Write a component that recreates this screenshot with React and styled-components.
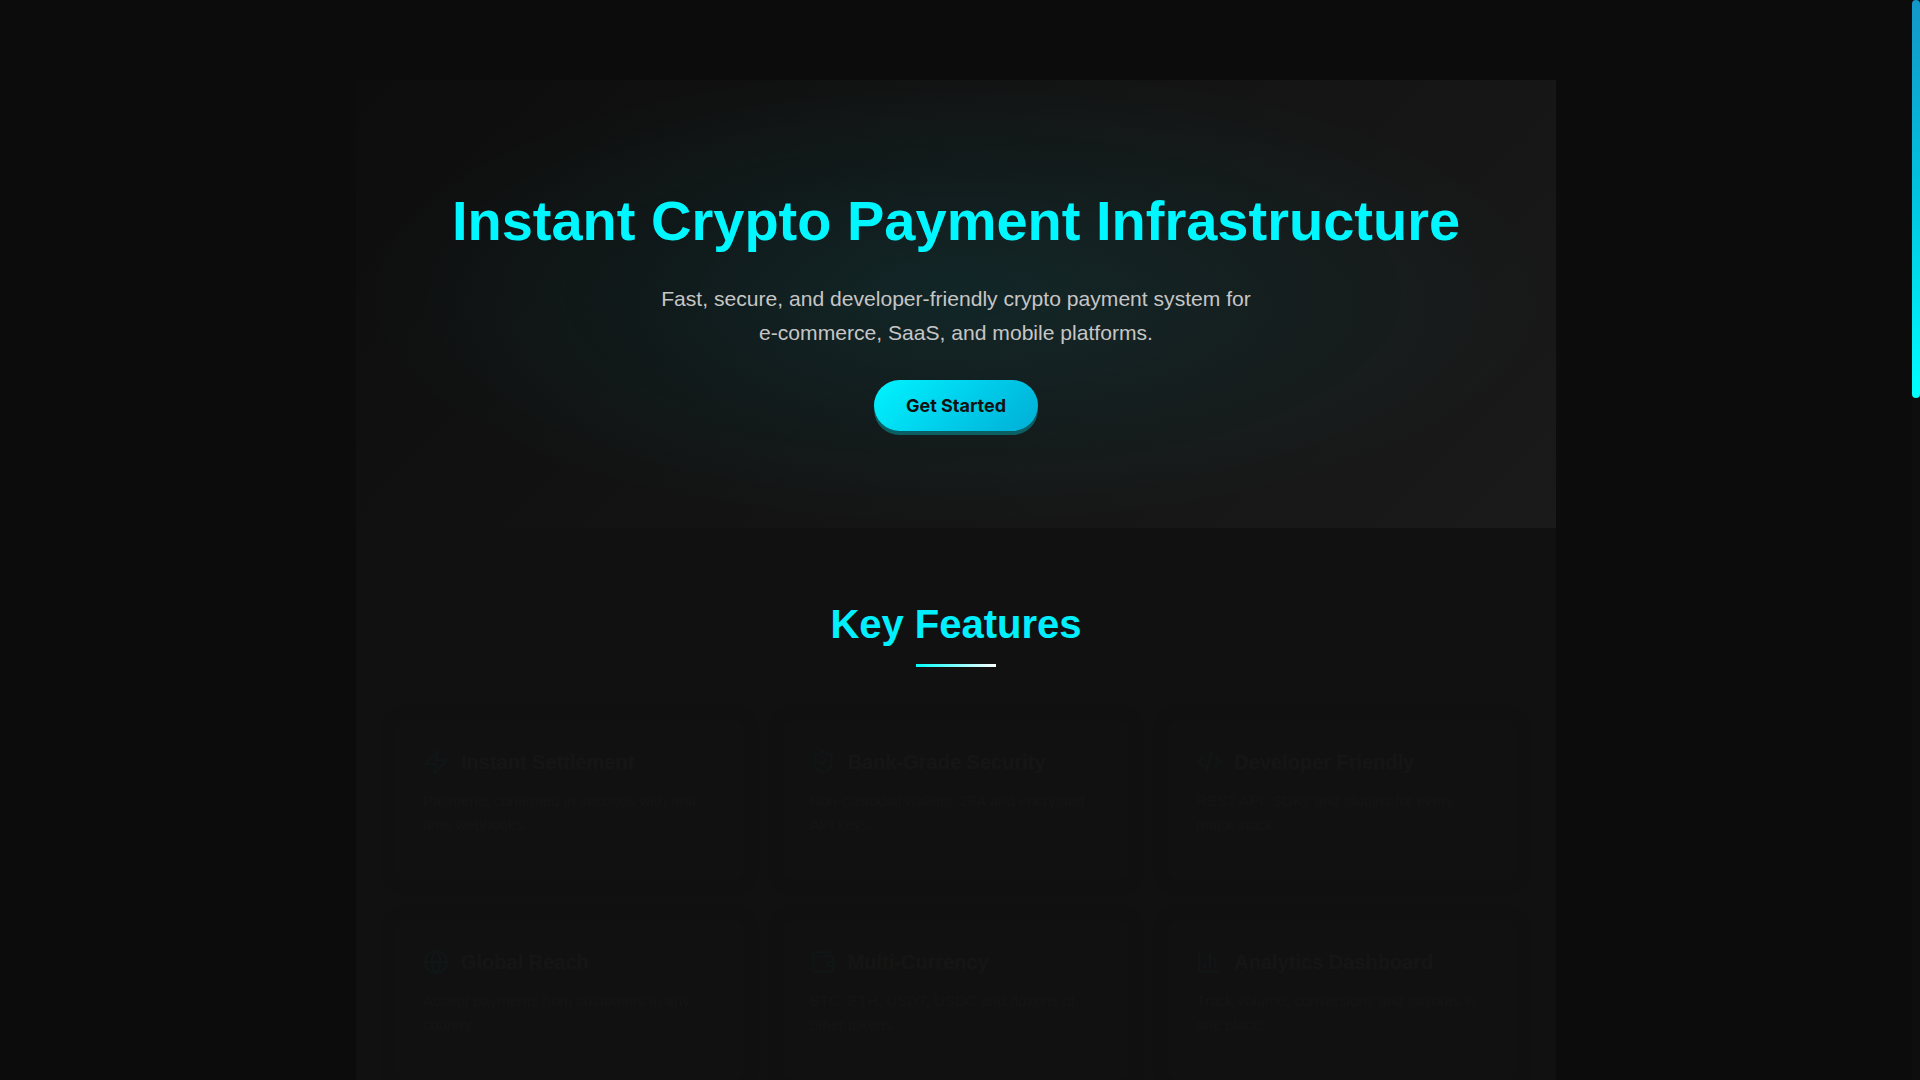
import React from 'react'
import styled, { createGlobalStyle } from 'styled-components'
import { Zap, ShieldCheck, Code2, Globe, Wallet, BarChart3, Link2, Coins, Rocket } from 'lucide-react'

const GlobalStyle = createGlobalStyle`
    * {
        box-sizing: border-box;
    }
    html, body {
        margin: 0;
        padding: 0;
        background-color: #0c0c0c;
        font-family: "Liberation Sans", Arial, sans-serif;
        color: #e0e0e0;
    }
    ::-webkit-scrollbar {
        width: 0;
    }
`

const Shell = styled.div`
    display: flex;
    align-items: flex-start;
`

const Main = styled.div`
    flex: 1;
    min-width: 0;
    padding-top: 80px;
`

// the page's custom scrollbar (cyan gradient thumb)
const Rail = styled.div`
    position: sticky;
    top: 0;
    flex-shrink: 0;
    width: 8px;
    height: 100vh;
    background-color: #0e0e0e;
`

const Thumb = styled.div`
    height: 398px;
    border-radius: 4px;
    background: linear-gradient(180deg, #1496c8 0%, #00c4e0 50%, #00ffff 100%);
`

const Container = styled.main`
    width: 1200px;
    margin: 0 auto;
    background-color: #111111;
`

const Hero = styled.section`
    padding: 109px 40px 97px;
    text-align: center;
    background:
        radial-gradient(ellipse at 50% 48%, rgba(0, 240, 255, 0.085) 0%, rgba(0, 240, 255, 0) 70%),
        linear-gradient(135deg, #0d0d0d 0%, #1a1a1a 100%);
`

const Title = styled.h1`
    margin: 0 0 29px;
    font-size: 56px;
    line-height: 1.15;
    font-weight: 700;
    color: #00f7ff;
`

const Subtitle = styled.p`
    max-width: 600px;
    margin: 0 auto 31px;
    font-size: 21.1px;
    line-height: 1.58;
    color: #c6c6c6;
`

const Actions = styled.div`
    display: flex;
    justify-content: center;
`

const Button = styled.a`
    display: block;
    padding: 15px 32px;
    border-radius: 50px;
    background: linear-gradient(135deg, #00f4ff 0%, #00ccea 55%, #00aed6 100%);
    box-shadow: 0 4px 0 rgba(0, 190, 200, 0.42);
    font-family: Inter, "Liberation Sans", sans-serif;
    font-size: 18px;
    font-weight: 700;
    color: #111111;
    text-decoration: none;
    cursor: pointer;
`

const Section = styled.section`
    padding: ${p => p.$top || 72}px 40px ${p => p.$bottom || 80}px;
    text-align: center;
`

const SectionTitle = styled.h2`
    margin: 0;
    font-size: 40px;
    line-height: 1.2;
    font-weight: 700;
    color: #00f0ff;
`

const Underline = styled.div`
    width: 80px;
    height: 3px;
    margin: 16px auto 53px;
    background: linear-gradient(90deg, #00ffff 0%, #ffffff 100%);
`

const Grid = styled.div`
    display: grid;
    grid-template-columns: repeat(${p => p.$cols || 3}, 1fr);
    gap: 40px;
`

const Card = styled.div`
    height: ${p => p.$h || 160}px;
    padding: 28px 26px;
    border-radius: 12px;
    background-color: #171717;
    border: 1px solid rgba(255, 255, 255, 0.06);
    box-shadow: 0 0 14px rgba(0, 0, 0, 0.7);
    text-align: left;
    opacity: 0.014;
`

const CardHead = styled.div`
    display: flex;
    align-items: center;
    gap: 12px;
    margin-bottom: 14px;
    color: #00f0ff;
`

const CardTitle = styled.h3`
    margin: 0;
    font-size: 20px;
    color: #ffffff;
`

const CardText = styled.p`
    margin: 0;
    font-size: 15px;
    line-height: 1.6;
    color: #bbbbbb;
`

const Footer = styled.footer`
    padding: 40px;
    border-top: 1px solid #1c1c1c;
    text-align: center;
    font-size: 14px;
    color: #555555;
`

const features = [
    { icon: Zap, title: 'Instant Settlement', text: 'Payments confirmed in seconds with real-time webhooks.' },
    { icon: ShieldCheck, title: 'Bank-Grade Security', text: 'Non-custodial wallets, 2FA and encrypted API keys.' },
    { icon: Code2, title: 'Developer Friendly', text: 'REST API, SDKs and plugins for every major stack.' },
    { icon: Globe, title: 'Global Reach', text: 'Accept payments from customers in any country.' },
    { icon: Wallet, title: 'Multi-Currency', text: 'BTC, ETH, USDT, USDC and dozens of other tokens.' },
    { icon: BarChart3, title: 'Analytics Dashboard', text: 'Track volume, conversions and payouts in one place.' },
]

const steps = [
    { icon: Link2, title: 'Integrate', text: 'Connect your store with a few lines of code.' },
    { icon: Coins, title: 'Accept', text: 'Customers pay with the crypto of their choice.' },
    { icon: Rocket, title: 'Get Paid', text: 'Funds settle straight to your wallet.' },
]

const App = () => {
    return (
        <Shell>
            <GlobalStyle />
            <Main>
                <Container>
                    <Hero>
                        <Title>Instant Crypto Payment Infrastructure</Title>
                        <Subtitle>
                            Fast, secure, and developer-friendly crypto payment system for e-commerce, SaaS, and mobile platforms.
                        </Subtitle>
                        <Actions>
                            <Button>Get Started</Button>
                        </Actions>
                    </Hero>

                    <Section id="features">
                        <SectionTitle>Key Features</SectionTitle>
                        <Underline />
                        <Grid>
                            {features.map(({ icon: Icon, title, text }) => (
                                <Card key={title}>
                                    <CardHead>
                                        <Icon size={26} />
                                        <CardTitle>{title}</CardTitle>
                                    </CardHead>
                                    <CardText>{text}</CardText>
                                </Card>
                            ))}
                        </Grid>
                    </Section>

                    <Section id="how" $top={80}>
                        <SectionTitle>How It Works</SectionTitle>
                        <Underline />
                        <Grid>
                            {steps.map(({ icon: Icon, title, text }) => (
                                <Card key={title} $h={200}>
                                    <CardHead>
                                        <Icon size={26} />
                                        <CardTitle>{title}</CardTitle>
                                    </CardHead>
                                    <CardText>{text}</CardText>
                                </Card>
                            ))}
                        </Grid>
                    </Section>

                    <Section id="contact" $top={80}>
                        <SectionTitle>Ready to Start?</SectionTitle>
                        <Underline />
                        <Actions>
                            <Button>Create Account</Button>
                        </Actions>
                    </Section>

                    <Footer>© 2025 Crypto Payment Infrastructure. All rights reserved.</Footer>
                </Container>
            </Main>
            <Rail>
                <Thumb />
            </Rail>
        </Shell>
    )
}

export default App
